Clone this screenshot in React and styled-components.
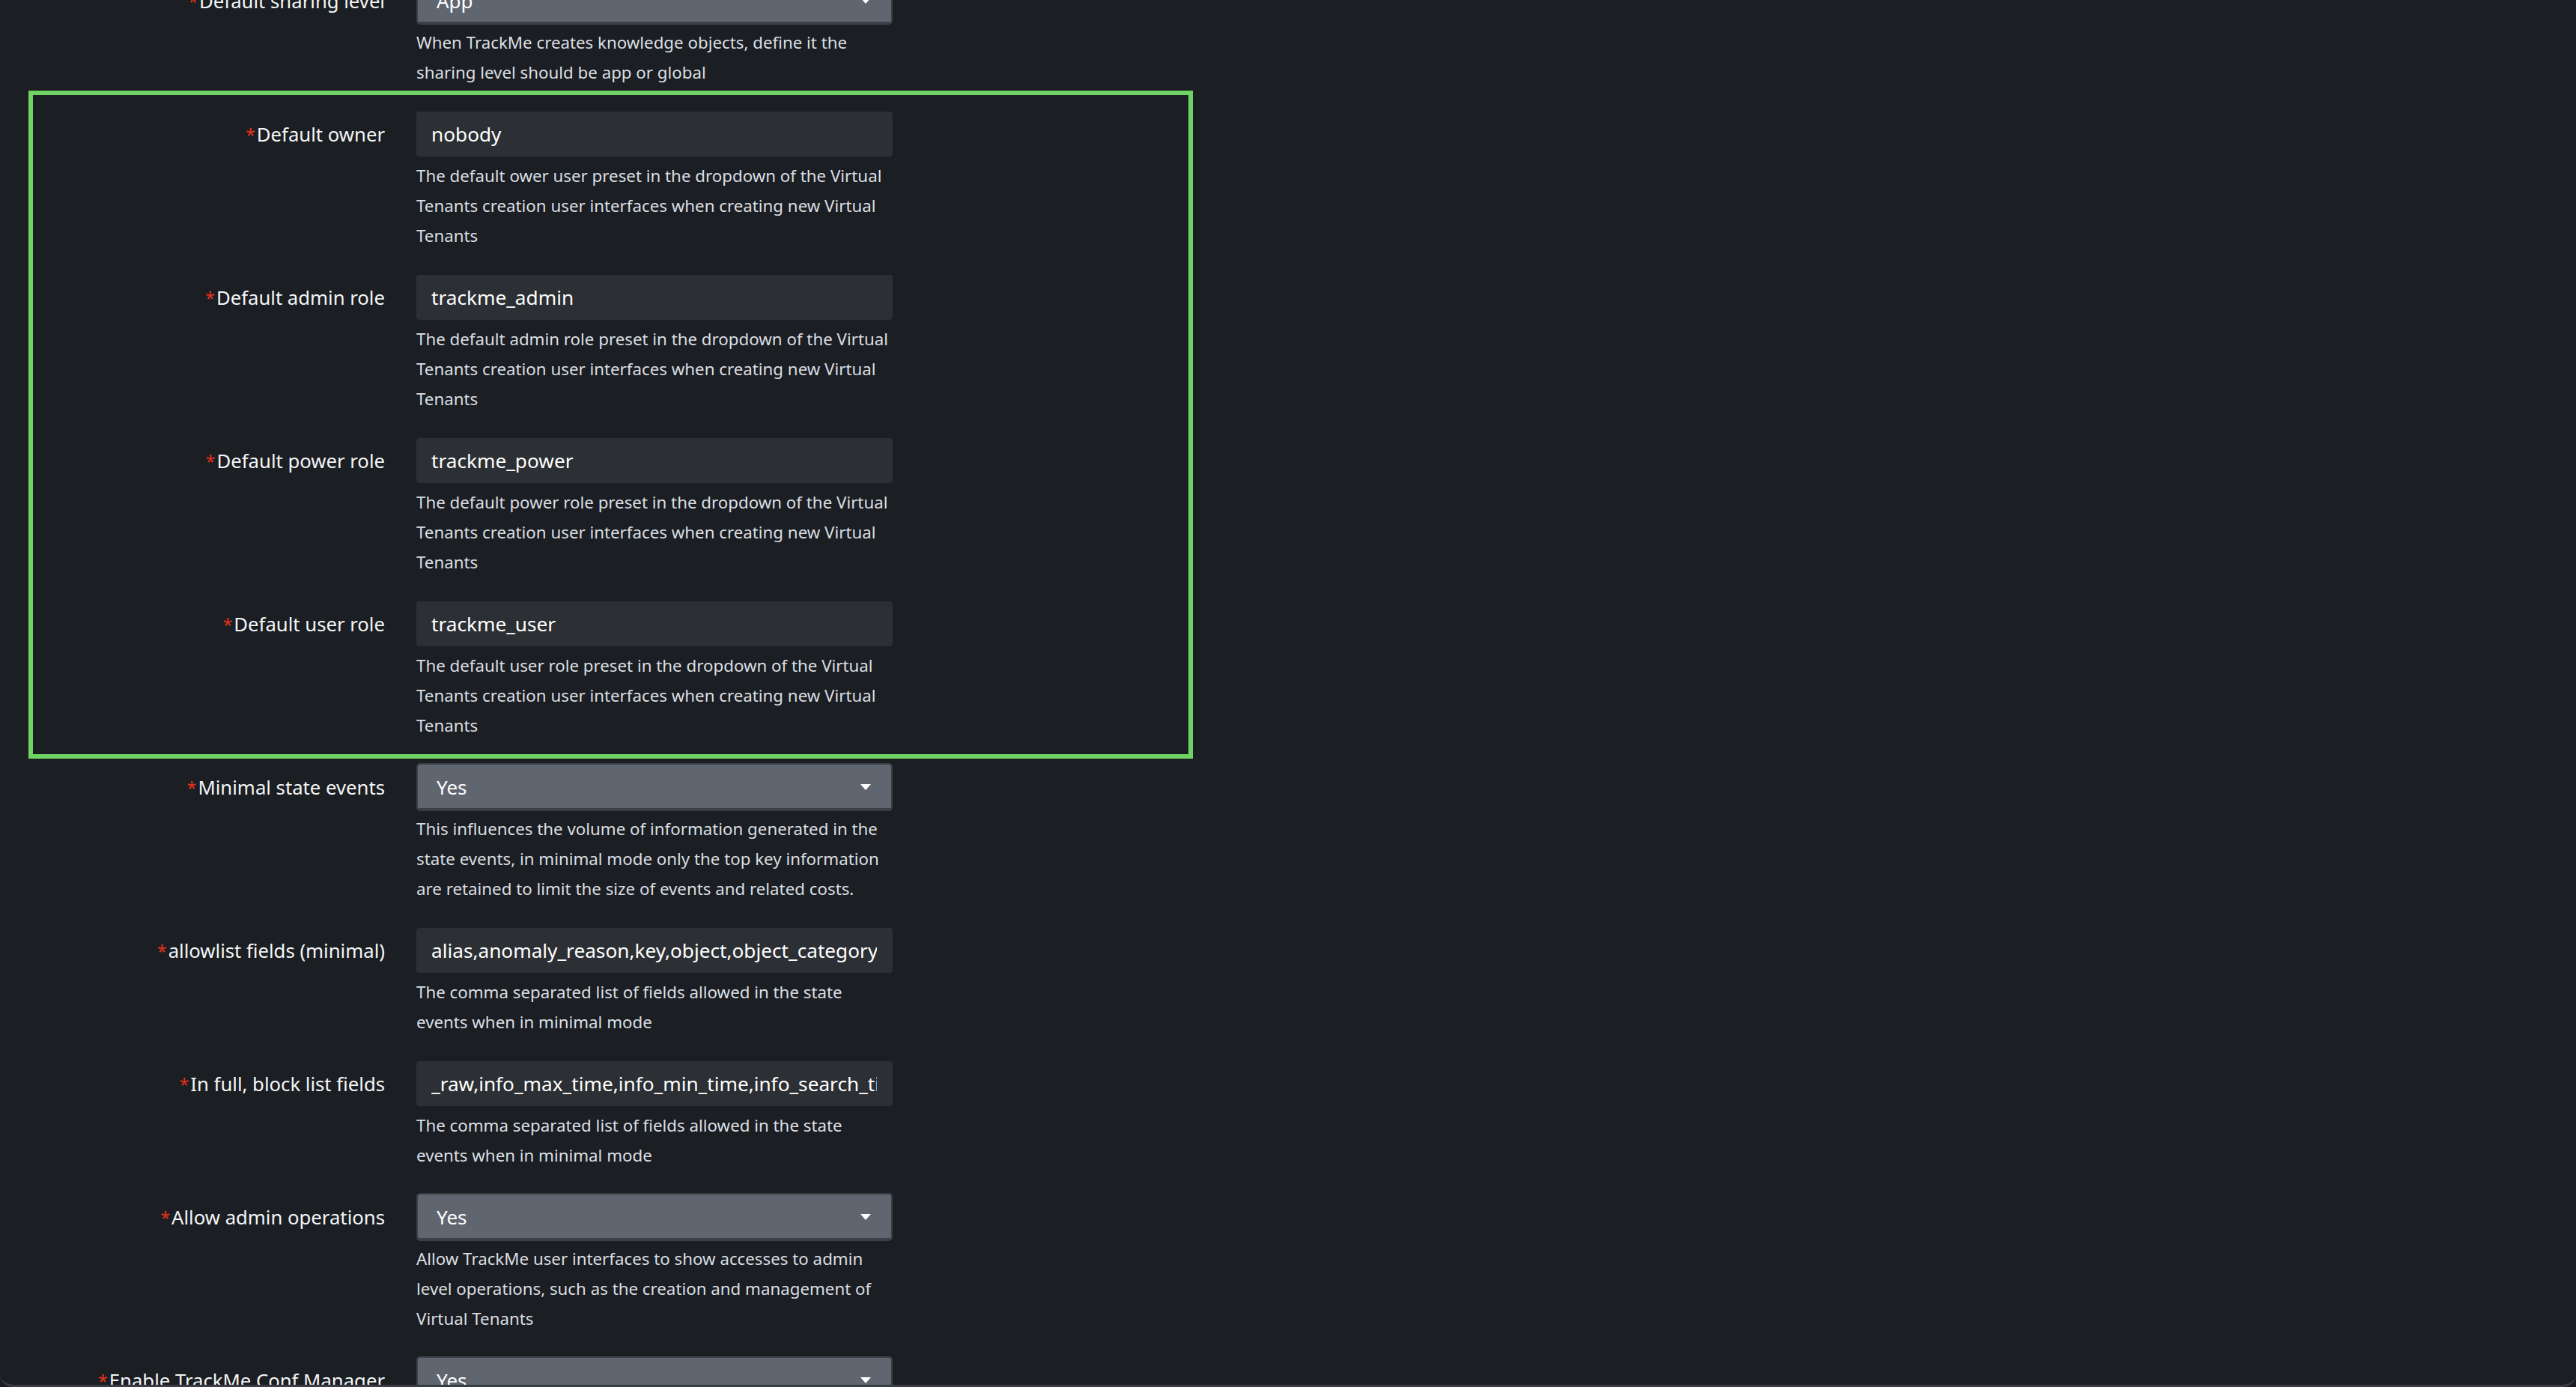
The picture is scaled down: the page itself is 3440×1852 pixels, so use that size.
import React from 'react';
import styled, { createGlobalStyle } from 'styled-components';

const Global = createGlobalStyle`
  html, body { margin: 0; padding: 0; background: #1b1e22; }
  body { font-family: "Noto Sans", Inter, sans-serif; }
  *, *::before, *::after { box-sizing: border-box; }
`;

const Frame = styled.div`
  height: 1852px;
  overflow: hidden;
  background: #1b1e22;
  border-bottom: 3px solid #3a3d42;
  border-radius: 0 0 18px 18px;
`;

const Form = styled.div`
  display: flex;
  flex-direction: column;
  gap: 32px;
  margin-top: -29px;
  width: 1600px;
`;

const Highlight = styled.div`
  position: relative;
  display: flex;
  flex-direction: column;
  gap: 32px;
  &::before {
    content: '';
    position: absolute;
    left: 38px;
    width: 1555px;
    top: -28px;
    bottom: -24px;
    border: 6px solid #6fd463;
    pointer-events: none;
  }
`;

const Row = styled.div`
  display: grid;
  grid-template-columns: 514px 636px;
  column-gap: 42px;
  align-items: start;
`;

const Label = styled.label`
  height: 60px;
  display: flex;
  align-items: center;
  justify-content: flex-end;
  font-size: 25.7px;
  color: #f4f6f8;
  white-space: nowrap;
`;

const Req = styled.span`
  color: #e3321f;
  font-size: 23px;
  margin-right: 2px;
`;

const Field = styled.div`
  display: flex;
  flex-direction: column;
  gap: 6px;
  min-width: 0;
`;

const TextInput = styled.input`
  height: 60px;
  width: 100%;
  border: 0;
  border-radius: 4px;
  background: #2c2f33;
  color: #ffffff;
  font-family: inherit;
  font-size: 26.2px;
  padding: 0 21px 0 20px;
  outline: none;
`;

const Select = styled.button`
  height: 64px;
  margin: -2px 0;
  width: 100%;
  border: 2px solid #3b4047;
  border-bottom-width: 4px;
  border-radius: 5px;
  background: #5f6670;
  color: #ffffff;
  font-family: inherit;
  font-size: 26px;
  display: flex;
  align-items: center;
  justify-content: space-between;
  padding: 2px 27px 0 25px;
  cursor: pointer;
`;

const Help = styled.p`
  margin: 0;
  font-size: 22.3px;
  line-height: 40px;
  color: #dadee3;
  white-space: nowrap;
`;

const Caret = () => (
  <svg width="14" height="8" viewBox="0 0 14 8">
    <polygon points="0,0 14,0 7,8" fill="#ffffff" />
  </svg>
);

const tenantsHelp = (role) => [
  `The default ${role} preset in the dropdown of the Virtual`,
  'Tenants creation user interfaces when creating new Virtual',
  'Tenants',
];

const fieldsHelp = [
  'The comma separated list of fields allowed in the state',
  'events when in minimal mode',
];

const before = [
  {
    label: 'Default sharing level', kind: 'select', value: 'App',
    help: ['When TrackMe creates knowledge objects, define it the', 'sharing level should be app or global'],
  },
];

const highlighted = [
  { label: 'Default owner', kind: 'input', value: 'nobody', help: tenantsHelp('ower user') },
  { label: 'Default admin role', kind: 'input', value: 'trackme_admin', help: tenantsHelp('admin role') },
  { label: 'Default power role', kind: 'input', value: 'trackme_power', help: tenantsHelp('power role') },
  { label: 'Default user role', kind: 'input', value: 'trackme_user', help: tenantsHelp('user role') },
];

const after = [
  {
    label: 'Minimal state events', kind: 'select', value: 'Yes',
    help: [
      'This influences the volume of information generated in the',
      'state events, in minimal mode only the top key information',
      'are retained to limit the size of events and related costs.',
    ],
  },
  {
    label: 'allowlist fields (minimal)', kind: 'input',
    value: 'alias,anomaly_reason,key,object,object_category,object_state,priority,tenant_id',
    help: fieldsHelp,
  },
  {
    label: 'In full, block list fields', kind: 'input',
    value: '_raw,info_max_time,info_min_time,info_search_time,info_sid,search_name',
    help: fieldsHelp,
  },
  {
    label: 'Allow admin operations', kind: 'select', value: 'Yes',
    help: [
      'Allow TrackMe user interfaces to show accesses to admin',
      'level operations, such as the creation and management of',
      'Virtual Tenants',
    ],
  },
  {
    label: 'Enable TrackMe Conf Manager', kind: 'select', value: 'Yes',
    help: ['Enable the TrackMe Conf Manager to track and version', 'the configuration of Virtual Tenants'],
  },
];

function FormRow({ item }) {
  return (
    <Row>
      <Label>
        <span>
          <Req>*</Req>
          {item.label}
        </span>
      </Label>
      <Field>
        {item.kind === 'select' ? (
          <Select type="button">
            <span>{item.value}</span>
            <Caret />
          </Select>
        ) : (
          <TextInput readOnly value={item.value} />
        )}
        <Help>
          {item.help.map((line, i) => (
            <React.Fragment key={i}>
              {i > 0 && <br />}
              {line}
            </React.Fragment>
          ))}
        </Help>
      </Field>
    </Row>
  );
}

export default function App() {
  return (
    <>
      <Global />
      <Frame>
        <Form>
          {before.map((item) => <FormRow key={item.label} item={item} />)}
          <Highlight>
            {highlighted.map((item) => <FormRow key={item.label} item={item} />)}
          </Highlight>
          {after.map((item) => <FormRow key={item.label} item={item} />)}
        </Form>
      </Frame>
    </>
  );
}
